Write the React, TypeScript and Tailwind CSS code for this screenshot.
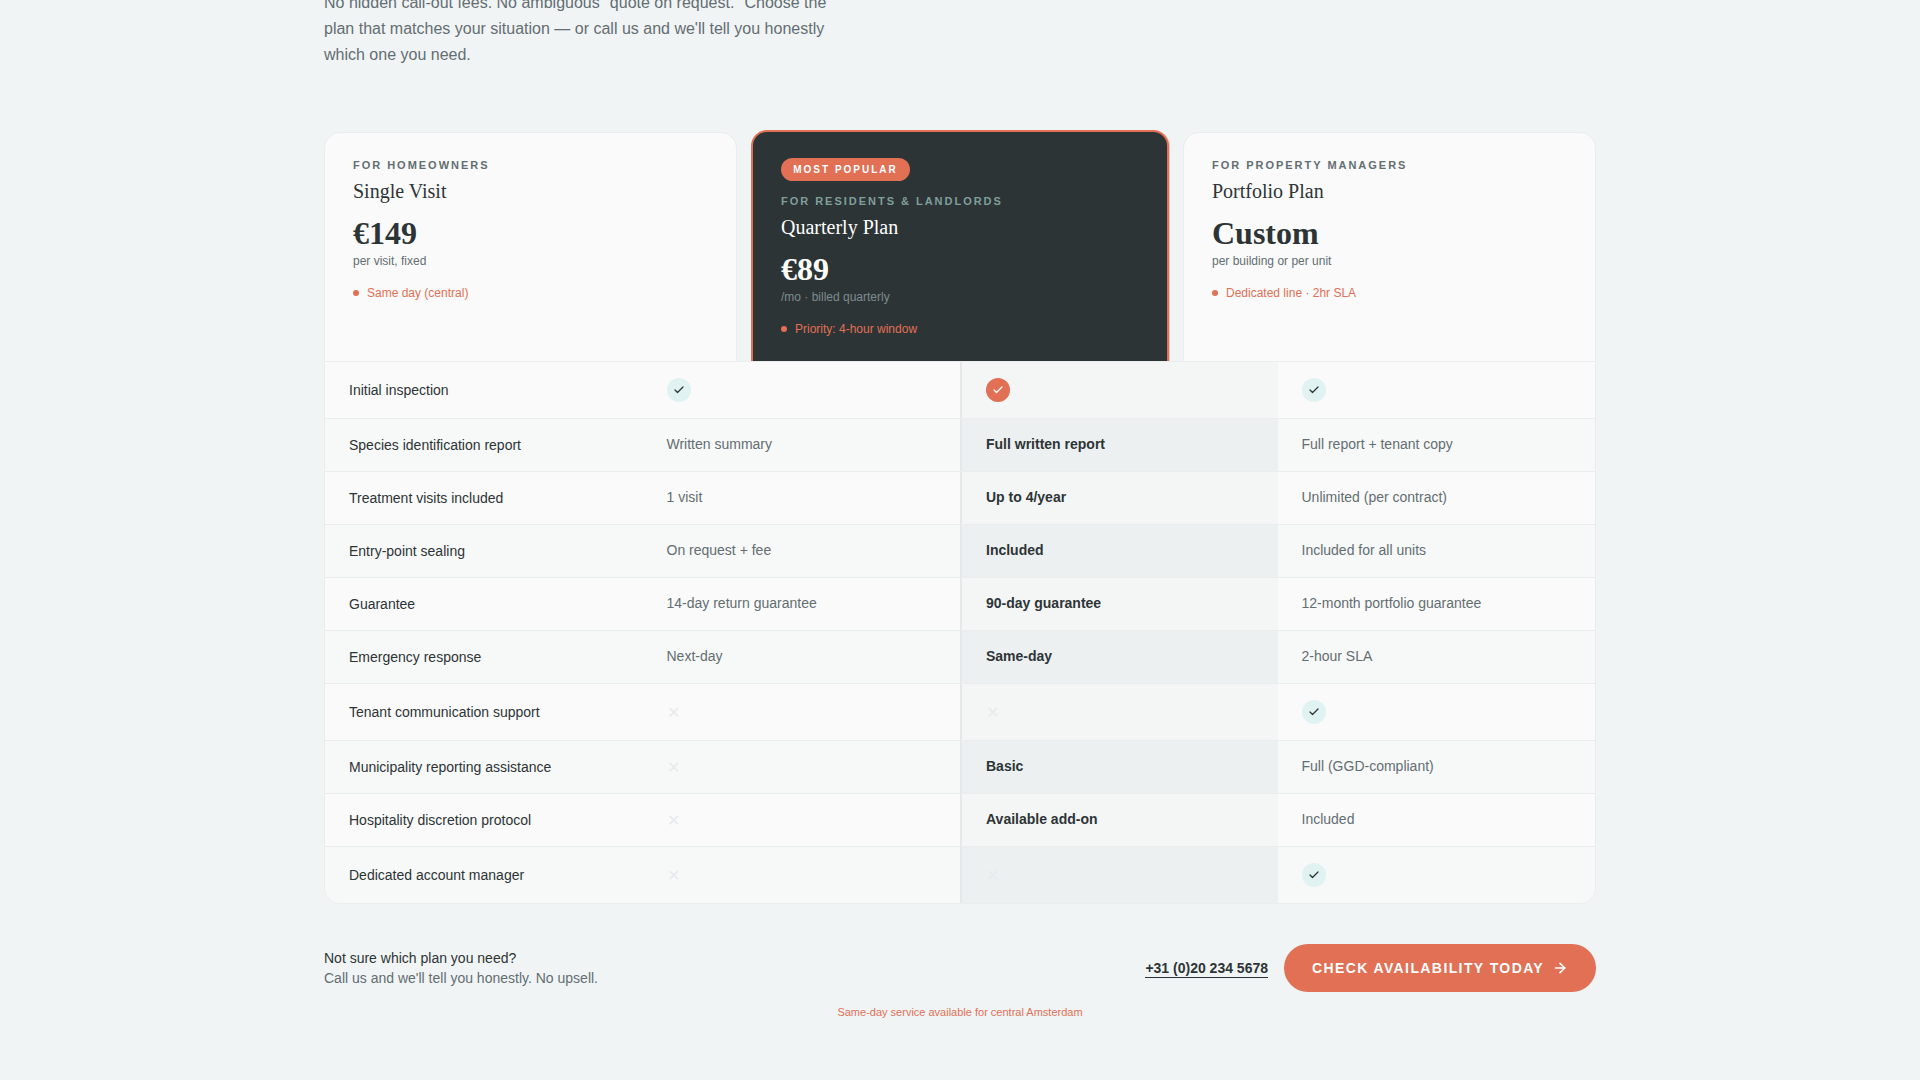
import { ArrowRight, Check } from "lucide-react";

const plans = [
  {
    eyebrow: "For homeowners",
    name: "Single Visit",
    price: "€149",
    sub: "per visit, fixed",
    perk: "Same day (central)",
  },
  {
    eyebrow: "For residents & landlords",
    name: "Quarterly Plan",
    price: "€89",
    sub: "/mo · billed quarterly",
    perk: "Priority: 4-hour window",
    featured: true,
  },
  {
    eyebrow: "For property managers",
    name: "Portfolio Plan",
    price: "Custom",
    sub: "per building or per unit",
    perk: "Dedicated line · 2hr SLA",
  },
];

const rows: [string, string, string, string][] = [
  ["Initial inspection", "yes", "yes", "yes"],
  ["Species identification report", "Written summary", "Full written report", "Full report + tenant copy"],
  ["Treatment visits included", "1 visit", "Up to 4/year", "Unlimited (per contract)"],
  ["Entry-point sealing", "On request + fee", "Included", "Included for all units"],
  ["Guarantee", "14-day return guarantee", "90-day guarantee", "12-month portfolio guarantee"],
  ["Emergency response", "Next-day", "Same-day", "2-hour SLA"],
  ["Tenant communication support", "no", "no", "yes"],
  ["Municipality reporting assistance", "no", "Basic", "Full (GGD-compliant)"],
  ["Hospitality discretion protocol", "no", "Available add-on", "Included"],
  ["Dedicated account manager", "no", "no", "yes"],
];

const rowHeights = [
  "h-[57px]",
  "h-[53px]",
  "h-[53px]",
  "h-[53px]",
  "h-[53px]",
  "h-[53px]",
  "h-[57px]",
  "h-[53px]",
  "h-[53px]",
  "h-[56px]",
];

const Cell = ({ value, featured }: { value: string; featured?: boolean }) => {
  if (value === "yes") {
    return (
      <span
        className={`flex h-6 w-6 items-center justify-center rounded-full ${
          featured ? "bg-[#e17055] text-white" : "bg-[#e0f2f1] text-[#2d3436]"
        }`}
      >
        <Check size={12} strokeWidth={2.5} />
      </span>
    );
  }
  if (value === "no") {
    return <span className="mt-px text-base text-[#e6ebed]">✕</span>;
  }
  return (
    <span className={`mb-0.5 ${featured ? "font-bold text-[#2d3436]" : "text-[#636e72]"}`}>{value}</span>
  );
};

export default function App() {
  return (
    <div className="h-screen overflow-hidden bg-[#f1f4f5] font-['Liberation_Sans',Arial,sans-serif]">
      <section className="mx-auto w-[1272px]">
        <p className="-mt-[10px] w-[520px] text-base leading-[26px] text-[#636e72]">
          No hidden call-out fees. No ambiguous "quote on request." Choose the plan that matches your situation — or call
          us and we'll tell you honestly which one you need.
        </p>

        <div className="mt-[62px] grid grid-cols-[413px_418px_413px] items-end gap-[14px]">
          {plans.map((plan) => (
            <div
              key={plan.name}
              className={
                plan.featured
                  ? "h-[231px] rounded-t-2xl border-2 border-b-0 border-[#e17055] bg-[#2d3436] px-7 pt-[26px] shadow-[1px_0_0_rgba(225,112,85,0.35)]"
                  : "h-[229px] rounded-t-2xl border border-b-0 border-[#e9edee] bg-[#fafafa] px-7 pt-[25px]"
              }
            >
              {plan.featured && (
                <span className="mb-[13px] flex h-[23px] w-[129px] items-center justify-center rounded-full bg-[#e17055] text-[10px] font-bold uppercase tracking-[0.2em] text-white">
                  Most popular
                </span>
              )}
              <div
                className={`text-[11px] leading-[14px] font-bold uppercase tracking-[0.18em] ${
                  plan.featured ? "text-[#7f9f9b]" : "text-[#636e72]"
                }`}
              >
                {plan.eyebrow}
              </div>
              <div
                className={`mt-[7px] font-['Liberation_Serif',serif] text-xl leading-[24px] ${
                  plan.featured ? "text-white" : "text-[#2d3436]"
                }`}
              >
                {plan.name}
              </div>
              <div
                className={`mt-[11px] font-['Liberation_Serif',serif] text-[32px] leading-[38px] font-bold ${
                  plan.featured ? "text-white" : "text-[#2d3436]"
                }`}
              >
                {plan.price}
              </div>
              <div className={`mt-px text-xs leading-[16px] ${plan.featured ? "text-[#7d8c8d]" : "text-[#636e72]"}`}>
                {plan.sub}
              </div>
              <div className="mt-[15px] flex items-center gap-2 text-xs leading-[18px] text-[#e17055]">
                <span className="h-1.5 w-1.5 rounded-full bg-[#e17055]" />
                {plan.perk}
              </div>
            </div>
          ))}
        </div>

        <div className="overflow-hidden rounded-b-2xl border border-[#e9edee] bg-[#fafafa] text-sm">
          {rows.map(([label, a, b, c], i) => (
            <div
              key={label}
              className={`grid grid-cols-4 border-b border-[#e9edee] last:border-b-0 ${
                i % 2 === 1 ? "bg-[#f7f8f8]" : ""
              } ${rowHeights[i]}`}
            >
              <div className="flex items-center pl-6 text-[#2d3436]">{label}</div>
              <div className="flex items-center pl-6">
                <Cell value={a} />
              </div>
              <div
                className={`flex items-center border-l-2 border-[#e4e8ea] pl-6 ${
                  i % 2 === 1 ? "bg-[#edf0f1]" : "bg-[#f4f6f6]"
                }`}
              >
                <Cell value={b} featured />
              </div>
              <div className="flex items-center pl-6">
                <Cell value={c} />
              </div>
            </div>
          ))}
        </div>

        <div className="mt-10 flex items-center justify-between">
          <div className="text-sm leading-[20px]">
            <div className="text-[#2d3436]">Not sure which plan you need?</div>
            <div className="text-[#636e72]">Call us and we'll tell you honestly. No upsell.</div>
          </div>
          <div className="flex items-center gap-4">
            <a className="border-b border-[#2d3436] text-sm leading-[18px] font-bold text-[#2d3436]">+31 (0)20 234 5678</a>
            <button className="flex h-12 w-[312px] items-center justify-center gap-2 rounded-full bg-[#e17055] text-sm font-bold uppercase tracking-[0.1em] text-white">
              Check availability today
              <ArrowRight size={16} strokeWidth={2.5} />
            </button>
          </div>
        </div>

        <p className="mt-3 text-center text-[11px] leading-[16px] text-[#e17055]">
          Same-day service available for central Amsterdam
        </p>
      </section>
    </div>
  );
}
